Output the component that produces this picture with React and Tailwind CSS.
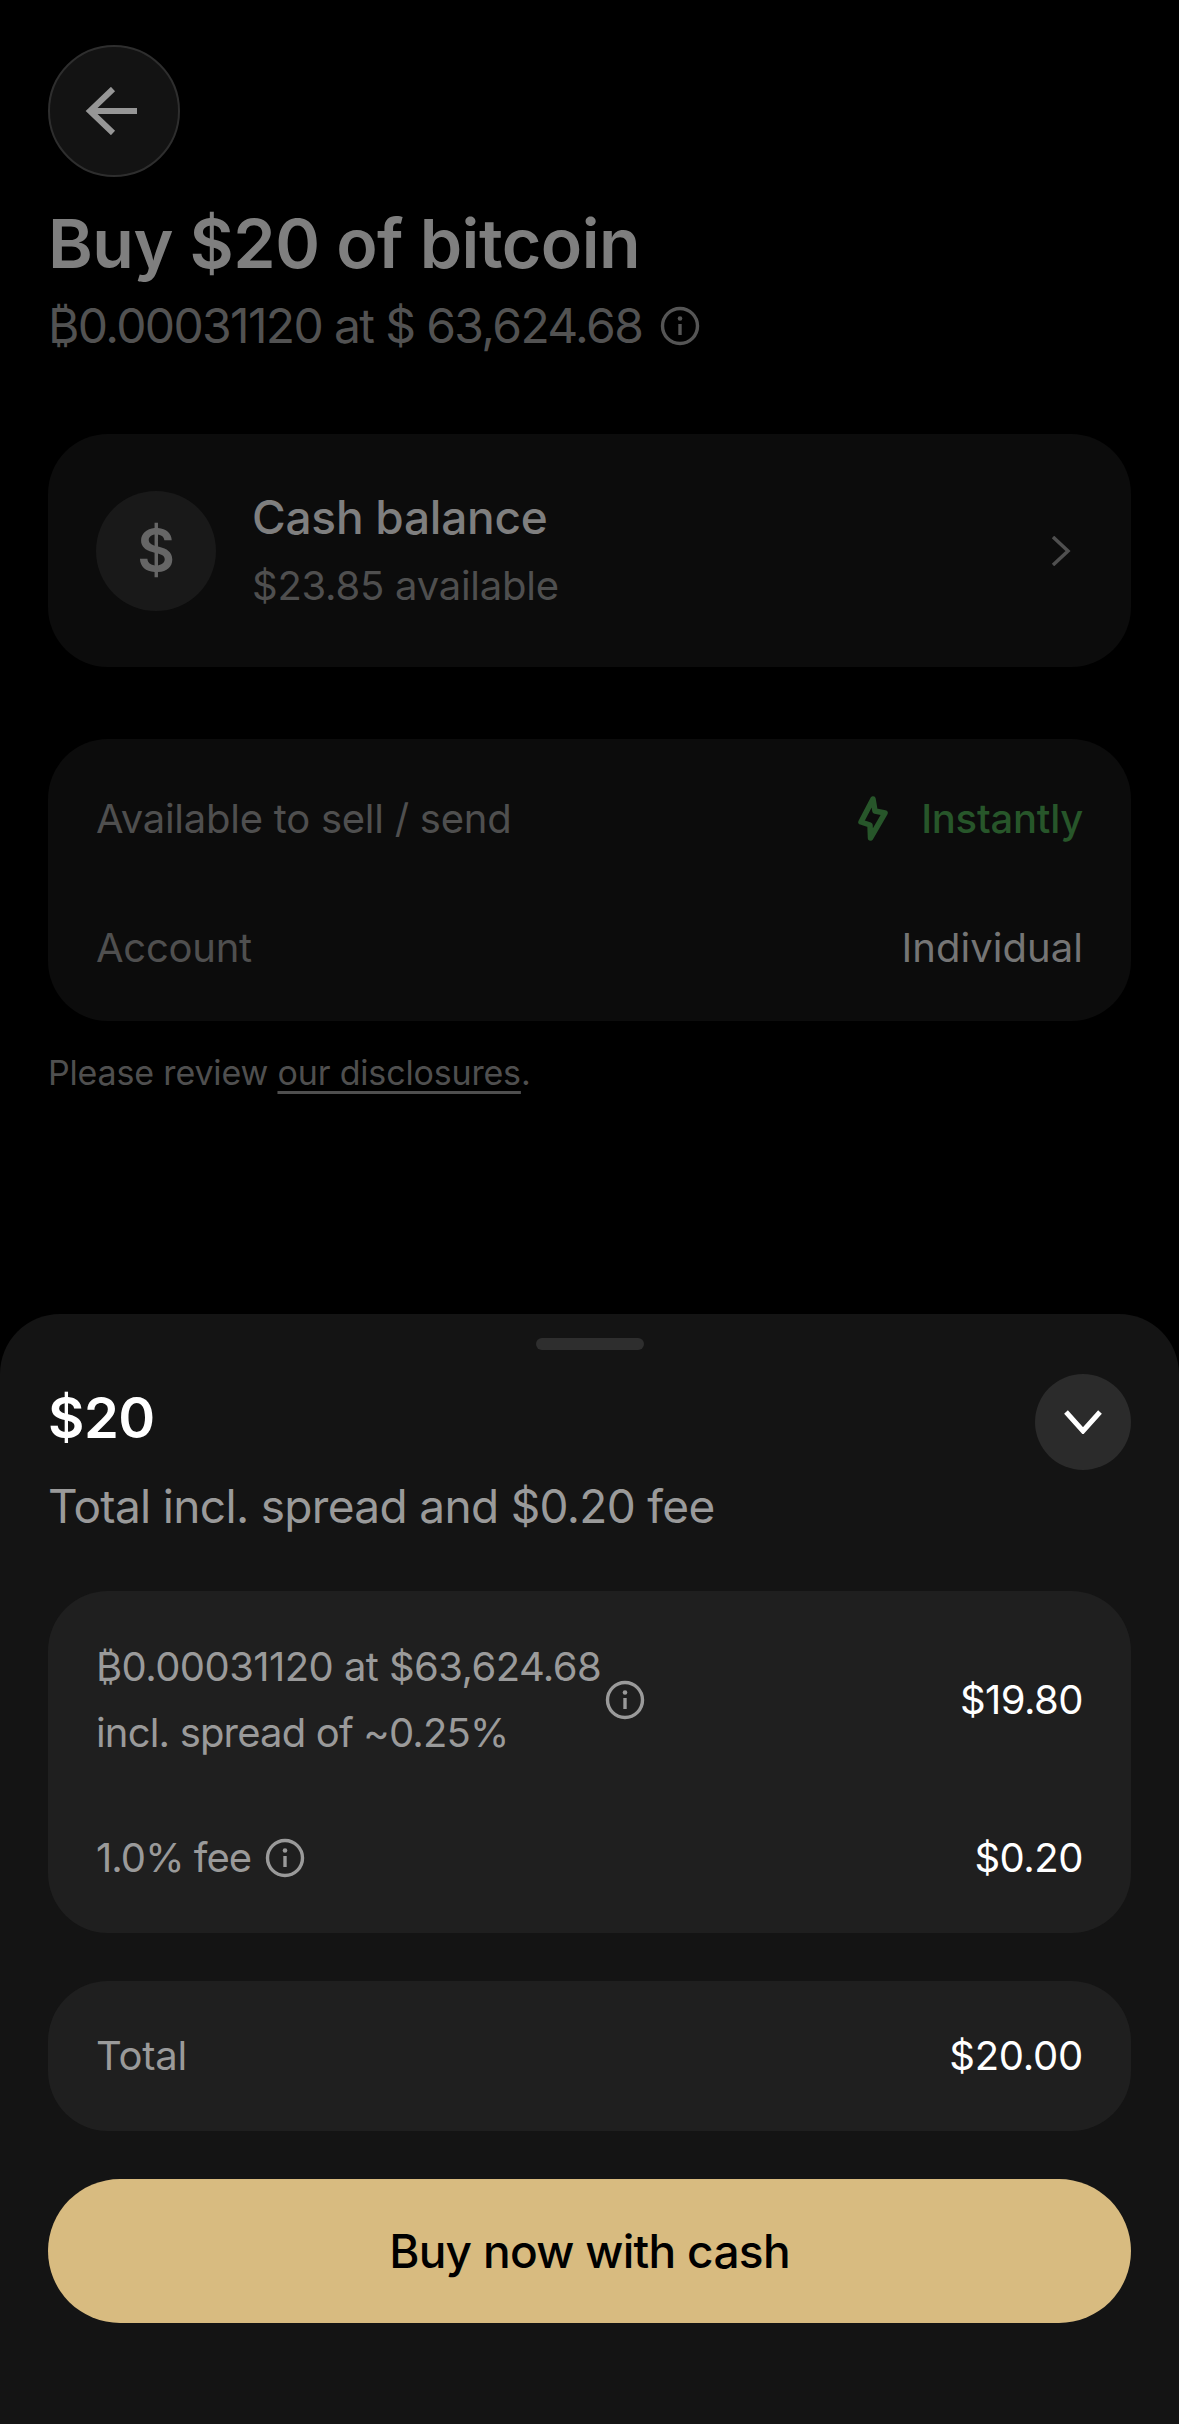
import React from "react";

const Info = ({ size = 40, color = "#555555", className = "" }) => (
  <svg width={size} height={size} viewBox="0 0 40 40" fill="none" className={"shrink-0 " + className}>
    <circle cx="20" cy="20" r="17.5" stroke={color} strokeWidth="3.4" />
    <circle cx="20" cy="12.5" r="2.3" fill={color} />
    <path d="M20 18v11" stroke={color} strokeWidth="3.4" />
  </svg>
);

export default function App() {
  return (
    <div className="h-[2424px] w-[1179px] bg-black flex flex-col justify-between overflow-hidden font-['Inter',sans-serif] tracking-[-0.25px]">
      <div className="px-12 pt-[45px]">
        <div className="w-[132px] h-[132px] rounded-full bg-[#131313] border-2 border-[#2e2e2e] flex items-center justify-center pr-[5px]">
          <svg width="54" height="48" viewBox="0 0 54 48" fill="none">
            <path d="M52 24H5M28 2L5 24l23 22" stroke="#969696" strokeWidth="6" />
          </svg>
        </div>
        <h1 className="mt-[26px] text-[68px] leading-[80px] font-semibold tracking-[-0.5px] text-[#7f7f7f]">Buy $20 of bitcoin</h1>
        <div className="mt-[13px] flex items-center gap-[18px] text-[48px] leading-[60px] tracking-[-1.64px] text-[#525252]">
          <span>₿0.00031120 at $ 63,624.68</span>
          <Info size={40} />
        </div>
        <div className="mt-[78px] h-[233px] rounded-[60px] bg-[#0c0c0c] pl-[48px] pr-[60px] flex items-center">
          <div className="w-[120px] h-[120px] rounded-full bg-[#191919] flex items-center justify-center text-[58px] font-semibold text-[#666666]">$</div>
          <div className="ml-[36px] flex-1">
            <div className="text-[46px] leading-[56px] font-medium text-[#7f7f7f]">Cash balance</div>
            <div className="mt-[15px] text-[40px] leading-[52px] text-[#4f4f4f]">$23.85 available</div>
          </div>
          <svg width="20" height="30" viewBox="0 0 20 30" fill="none">
            <path d="M2 1l15 14L2 29" stroke="#4f4f4f" strokeWidth="3.5" />
          </svg>
        </div>
        <div className="mt-[72px] h-[282px] rounded-[60px] bg-[#0c0c0c] px-[48px] pt-[47px] flex flex-col text-[40px] leading-[52px]">
          <div className="flex items-center justify-between h-[66px]">
            <span className="text-[#4f4f4f]">Available to sell / send</span>
            <span className="flex items-center gap-[31px] text-[#27562a] font-medium">
              <svg width="34" height="48" viewBox="0 0 32 48" fill="none">
                <path d="M16 4L4 27l9 3 .5 13L28 18l-10-2z" stroke="#27562a" strokeWidth="5.5" strokeLinejoin="round" />
              </svg>
              Instantly
            </span>
          </div>
          <div className="flex items-center justify-between mt-[70px]">
            <span className="text-[#4f4f4f]">Account</span>
            <span className="text-[#757575] tracking-[0.05px]">Individual</span>
          </div>
        </div>
        <p className="mt-[30px] text-[34px] leading-[44px] tracking-[-0.17px] text-[#4f4f4f]">
          Please review <span className="underline underline-offset-[6px]">our disclosures</span>.
        </p>
      </div>

      <div className="h-[1110px] rounded-t-[60px] bg-[#141414] px-12 relative">
        <div className="absolute left-[536px] top-[24px] w-[108px] h-[12px] rounded-full bg-[#2e2e2e]" />
        <div className="flex justify-between pt-[60px]">
          <div className="text-[56px] leading-[88px] font-semibold tracking-[-0.5px] text-white">$20</div>
          <div className="w-[96px] h-[96px] rounded-full bg-[#2b2b2b] flex items-center justify-center">
            <svg width="38" height="24" viewBox="0 0 38 24" fill="none">
              <path d="M2 2l17 19L36 2" stroke="#ffffff" strokeWidth="5" />
            </svg>
          </div>
        </div>
        <div className="mt-[6px] text-[46px] leading-[60px] tracking-[-0.67px] text-[#9a9a9a]">Total incl. spread and $0.20 fee</div>
        <div className="mt-[55px] h-[342px] rounded-[60px] bg-[#1f1f1f] px-[48px] pt-[43px] text-[40px] leading-[66px] text-[#9a9a9a]">
          <div className="flex items-center justify-between">
            <div className="flex items-center gap-[4px]">
              <div>
                <div className="tracking-[-0.57px]">₿0.00031120 at $63,624.68</div>
                <div className="tracking-[-0.83px]">incl. spread of ~0.25%</div>
              </div>
              <Info size={40} color="#9a9a9a" />
            </div>
            <span className="text-white tracking-[-0.55px]">$19.80</span>
          </div>
          <div className="mt-[59px] flex items-center justify-between">
            <div className="flex items-center gap-[14px] tracking-[-0.96px]">
              <span>1.0% fee</span>
              <Info size={40} color="#9a9a9a" />
            </div>
            <span className="text-white tracking-[-0.5px]">$0.20</span>
          </div>
        </div>
        <div className="mt-[48px] h-[150px] rounded-[60px] bg-[#1f1f1f] px-[48px] flex items-center justify-between text-[40px]">
          <span className="text-[#9a9a9a]">Total</span>
          <span className="text-white">$20.00</span>
        </div>
        <button className="mt-[48px] w-full h-[144px] rounded-[72px] bg-[#d8bb80] text-[46px] font-medium tracking-[-0.7px] text-black flex items-center justify-center">
          Buy now with cash
        </button>
      </div>
    </div>
  );
}
